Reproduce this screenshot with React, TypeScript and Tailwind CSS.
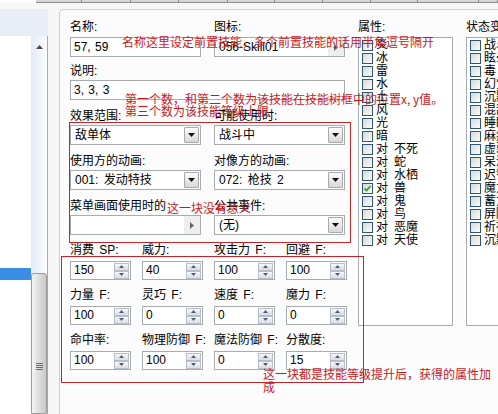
import React from 'react';

const ATTRS = ['炎', '冰', '雷', '水', '土', '风', '光', '暗', '对\u2002不死', '对\u2002蛇', '对\u2002水栖', '对\u2002兽', '对\u2002鬼', '对\u2002鸟', '对\u2002恶魔', '对\u2002天使'];
const STATES = ['战斗不能', '眩晕', '毒', '幻觉', '沉默', '混乱', '睡眠', '麻痹', '虚弱', '呆滞', '迟钝', '魔力低下', '蓄力', '屏障', '祈祷', '沉默'];

const STATS = [
  [['消费 SP:', '150'], ['威力:', '40'], ['攻击力 F:', '100'], ['回避 F:', '100']],
  [['力量 F:', '100'], ['灵巧 F:', '0'], ['速度 F:', '0'], ['魔力 F:', '0']],
  [['命中率:', '100'], ['物理防御 F:', '100'], ['魔法防御 F:', '0'], ['分散度:', '15']],
];

const TABS = [46, 49, 48, 49, 47, 48, 48, 47, 61, 19];

function Label({ children, className = '' }: { children: React.ReactNode; className?: string }) {
  return <div className={`h-[14px] whitespace-nowrap text-[12px] leading-[14px] [word-spacing:2px] ${className}`}>{children}</div>;
}

function TextBox({ value, className = '' }: { value: string; className?: string }) {
  return (
    <div className={`h-[20px] border border-[#a5acb2] bg-white px-[3px] text-[12px] leading-[18px] [word-spacing:1px] ${className}`}>
      {value}
    </div>
  );
}

function ComboBox({ value }: { value: string }) {
  return (
    <div className="flex h-[20px] items-center border border-[#a5acb2] bg-white pl-[4px] pr-[1px]">
      <span className="flex-1 whitespace-nowrap text-[12px] leading-[18px] [word-spacing:2px]">{value}</span>
      <span className="flex h-[16px] w-[15px] items-center justify-center rounded-[1px] border border-[#a9a9a9] bg-linear-to-b from-[#fbfbfb] to-[#d8d8d8]">
        <svg width="7" height="4" viewBox="0 0 7 4">
          <path d="M0 0h7L3.5 4z" fill="#111" />
        </svg>
      </span>
    </div>
  );
}

function PickerBox({ value, className = '' }: { value: string; className?: string }) {
  return (
    <div className={`flex h-[20px] items-center border border-[#a5acb2] bg-white pl-[4px] ${className}`}>
      <span className="flex-1 whitespace-nowrap text-[12px] leading-[18px]">{value}</span>
      <span className="flex h-full w-[16px] items-center justify-center bg-[#eeeeee]">
        <svg width="4" height="7" viewBox="0 0 4 7">
          <path d="M0 0l4 3.5L0 7z" fill="#666" />
        </svg>
      </span>
    </div>
  );
}

function SpinButton({ up }: { up?: boolean }) {
  return (
    <span className="flex h-[8px] w-[15px] items-center justify-center border border-[#b7bec8] bg-linear-to-b from-[#f6f8fb] to-[#d9dfe7]">
      <svg width="5" height="3" viewBox="0 0 5 3">
        <path d={up ? 'M0 3h5L2.5 0z' : 'M0 0h5L2.5 3z'} fill="#4d5b73" />
      </svg>
    </span>
  );
}

function SpinBox({ value }: { value: string }) {
  return (
    <div className="flex h-[19px] w-[61px] items-center border border-[#a5acb2] bg-white pl-[3px] pr-[1px]">
      <span className="flex-1 text-[12px] leading-[17px]">{value}</span>
      <span className="flex flex-col">
        <SpinButton up />
        <SpinButton />
      </span>
    </div>
  );
}

function CheckBox({ checked }: { checked?: boolean }) {
  return (
    <span className="flex h-[11px] w-[11px] shrink-0 items-center justify-center border border-[#2e5877] bg-linear-to-br from-[#d9d9d4] to-[#fbfbfb]">
      {checked && (
        <svg width="7" height="7" viewBox="0 0 7 7">
          <path d="M0.5 3.5l2 2L6.5 1" stroke="#21a121" strokeWidth="1.6" fill="none" />
        </svg>
      )}
    </span>
  );
}

function CheckList({ items, checked = -1 }: { items: string[]; checked?: number }) {
  return (
    <div className="mt-[3px] h-[289px] w-[95px] border border-[#a5acb2] bg-white pt-[1px]">
      {items.map((item, i) => (
        <div key={i} className="flex h-[13px] items-center pl-[3px]">
          <CheckBox checked={i === checked} />
          <span className="ml-[3px] whitespace-nowrap text-[12px] leading-[13px]">{item}</span>
        </div>
      ))}
    </div>
  );
}

function SkillList() {
  return (
    <div className="flex w-[48px] shrink-0 flex-col">
      <div className="h-[27px] bg-[#e8eef7]" />
      <div className="flex flex-1 border-r border-[#a9a9a9] bg-white">
        <div className="w-[31px] pt-[232px]">
          <div className="h-[12px] bg-[#3b8ee6]" />
        </div>
        {/* vertical scrollbar */}
        <div className="flex w-[16px] flex-col bg-linear-to-r from-[#e3ebf7] to-[#fafcff]">
          <div className="flex h-[22px] items-center justify-center">
            <svg width="7" height="4" viewBox="0 0 7 4">
              <path d="M0 4h7L3.5 0z" fill="#4a4a4a" />
            </svg>
          </div>
          <div className="h-[215px]" />
          <div className="flex flex-1 flex-col items-center rounded-t-[3px] border border-[#9c9c9c] bg-linear-to-r from-[#f4f4f4] via-[#dedede] to-[#c9c9c9] pt-[89px]">
            <div className="flex flex-col gap-[1px]">
              <div className="h-[1px] w-[7px] bg-[#6a6a6a]" />
              <div className="h-[1px] w-[7px] bg-[#6a6a6a]" />
              <div className="h-[1px] w-[7px] bg-[#6a6a6a]" />
              <div className="h-[1px] w-[7px] bg-[#6a6a6a]" />
            </div>
          </div>
        </div>
      </div>
    </div>
  );
}

function SkillForm() {
  return (
    <div className="flex w-[275px] shrink-0 flex-col">
      <div className="grid grid-cols-[131px_131px] gap-x-[13px]">
        <div>
          <Label>名称:</Label>
          <TextBox className="mt-[3px]" value="57, 59" />
        </div>
        <div>
          <Label>图标:</Label>
          <PickerBox className="mt-[3px]" value="056-Skill01" />
        </div>
      </div>

      <Label className="mt-[7px]">说明:</Label>
      <TextBox className="mt-[2px]" value="3, 3, 3" />

      <div className="mt-[9px] grid grid-cols-[131px_131px] gap-x-[13px] gap-y-[9px]">
        <div>
          <Label>效果范围:</Label>
          <div className="mt-[2px]"><ComboBox value="敌单体" /></div>
        </div>
        <div>
          <Label>可能使用时:</Label>
          <div className="mt-[2px]"><ComboBox value="战斗中" /></div>
        </div>
        <div>
          <Label>使用方的动画:</Label>
          <div className="mt-[2px]"><ComboBox value="001: 发动特技" /></div>
        </div>
        <div>
          <Label>对像方的动画:</Label>
          <div className="mt-[2px]"><ComboBox value="072: 枪技 2" /></div>
        </div>
        <div>
          <Label>菜单画面使用时的</Label>
          <PickerBox className="mt-[2px]" value="" />
        </div>
        <div>
          <Label>公共事件:</Label>
          <div className="mt-[2px]"><ComboBox value="(无)" /></div>
        </div>
      </div>

      <div className="mt-[8px] grid grid-cols-[61px_61px_61px_61px] gap-x-[11px] gap-y-[8px]">
        {STATS.flat().map(([label, value]) => (
          <div key={label}>
            <Label>{label}</Label>
            <div className="mt-[4px]"><SpinBox value={value} /></div>
          </div>
        ))}
      </div>
    </div>
  );
}

export default function App() {
  return (
    <div className="relative flex h-[414px] w-[498px] flex-col overflow-hidden bg-[#f7f7f7] font-['Liberation_Sans','Noto_Sans_CJK_SC',sans-serif] text-[12px] text-black">
      {/* bottom edge of the toolbar tabs */}
      <div className="flex h-[3px] shrink-0">
        <div className="w-[36px] bg-white" />
        {TABS.map((w, i) => (
          <div key={i} className="shrink-0 border-b border-r border-[#8c8c8c] bg-[#d6d6d6]" style={{ width: w }} />
        ))}
      </div>

      <div className="flex flex-1 pt-[6px]">
        <SkillList />
        <div className="ml-[11px] flex flex-1 rounded-tl-[5px] border-l border-t border-[#d0d0c8] bg-[#fcfcfc] pl-[10px] pt-[10px]">
          <SkillForm />
          <div className="ml-[13px] shrink-0">
            <Label>属性:</Label>
            <CheckList items={ATTRS} checked={11} />
          </div>
          <div className="ml-[13px] shrink-0">
            <Label>状态变化:</Label>
            <CheckList items={STATES} />
          </div>
        </div>
      </div>

      {/* red notes drawn over the form */}
      <div className="pointer-events-none absolute left-[69px] top-[122px] h-[121px] w-[282px] border border-[#c4232a]" />
      <div className="pointer-events-none absolute left-[61px] top-[256px] h-[127px] w-[303px] border border-[#c4232a]" />
      <div className="pointer-events-none absolute left-[122px] top-[35px] whitespace-nowrap font-['Noto_Sans_CJK_SC',sans-serif] text-[12px] leading-[14px] text-[#c8191f]">
        名称这里设定前置技能，多个前置技能的话用半角逗号隔开
      </div>
      <div className="pointer-events-none absolute left-[125px] top-[93px] whitespace-nowrap font-['Noto_Sans_CJK_SC',sans-serif] text-[12px] leading-[12px] text-[#c8191f]">
        第一个数，和第二个数为该技能在技能树框中的位置x, y值。
        <br />
        第三个数为该技能等级上限
      </div>
      <div className="pointer-events-none absolute left-[167px] top-[201px] whitespace-nowrap font-['Noto_Sans_CJK_SC',sans-serif] text-[12px] leading-[14px] text-[#c8191f]">
        这一块没有意义
      </div>
      <div className="pointer-events-none absolute left-[263px] top-[367px] whitespace-nowrap font-['Noto_Sans_CJK_SC',sans-serif] text-[12px] leading-[13px] text-[#c8191f]">
        这一块都是技能等级提升后，获得的属性加
        <br />
        成
      </div>
    </div>
  );
}
